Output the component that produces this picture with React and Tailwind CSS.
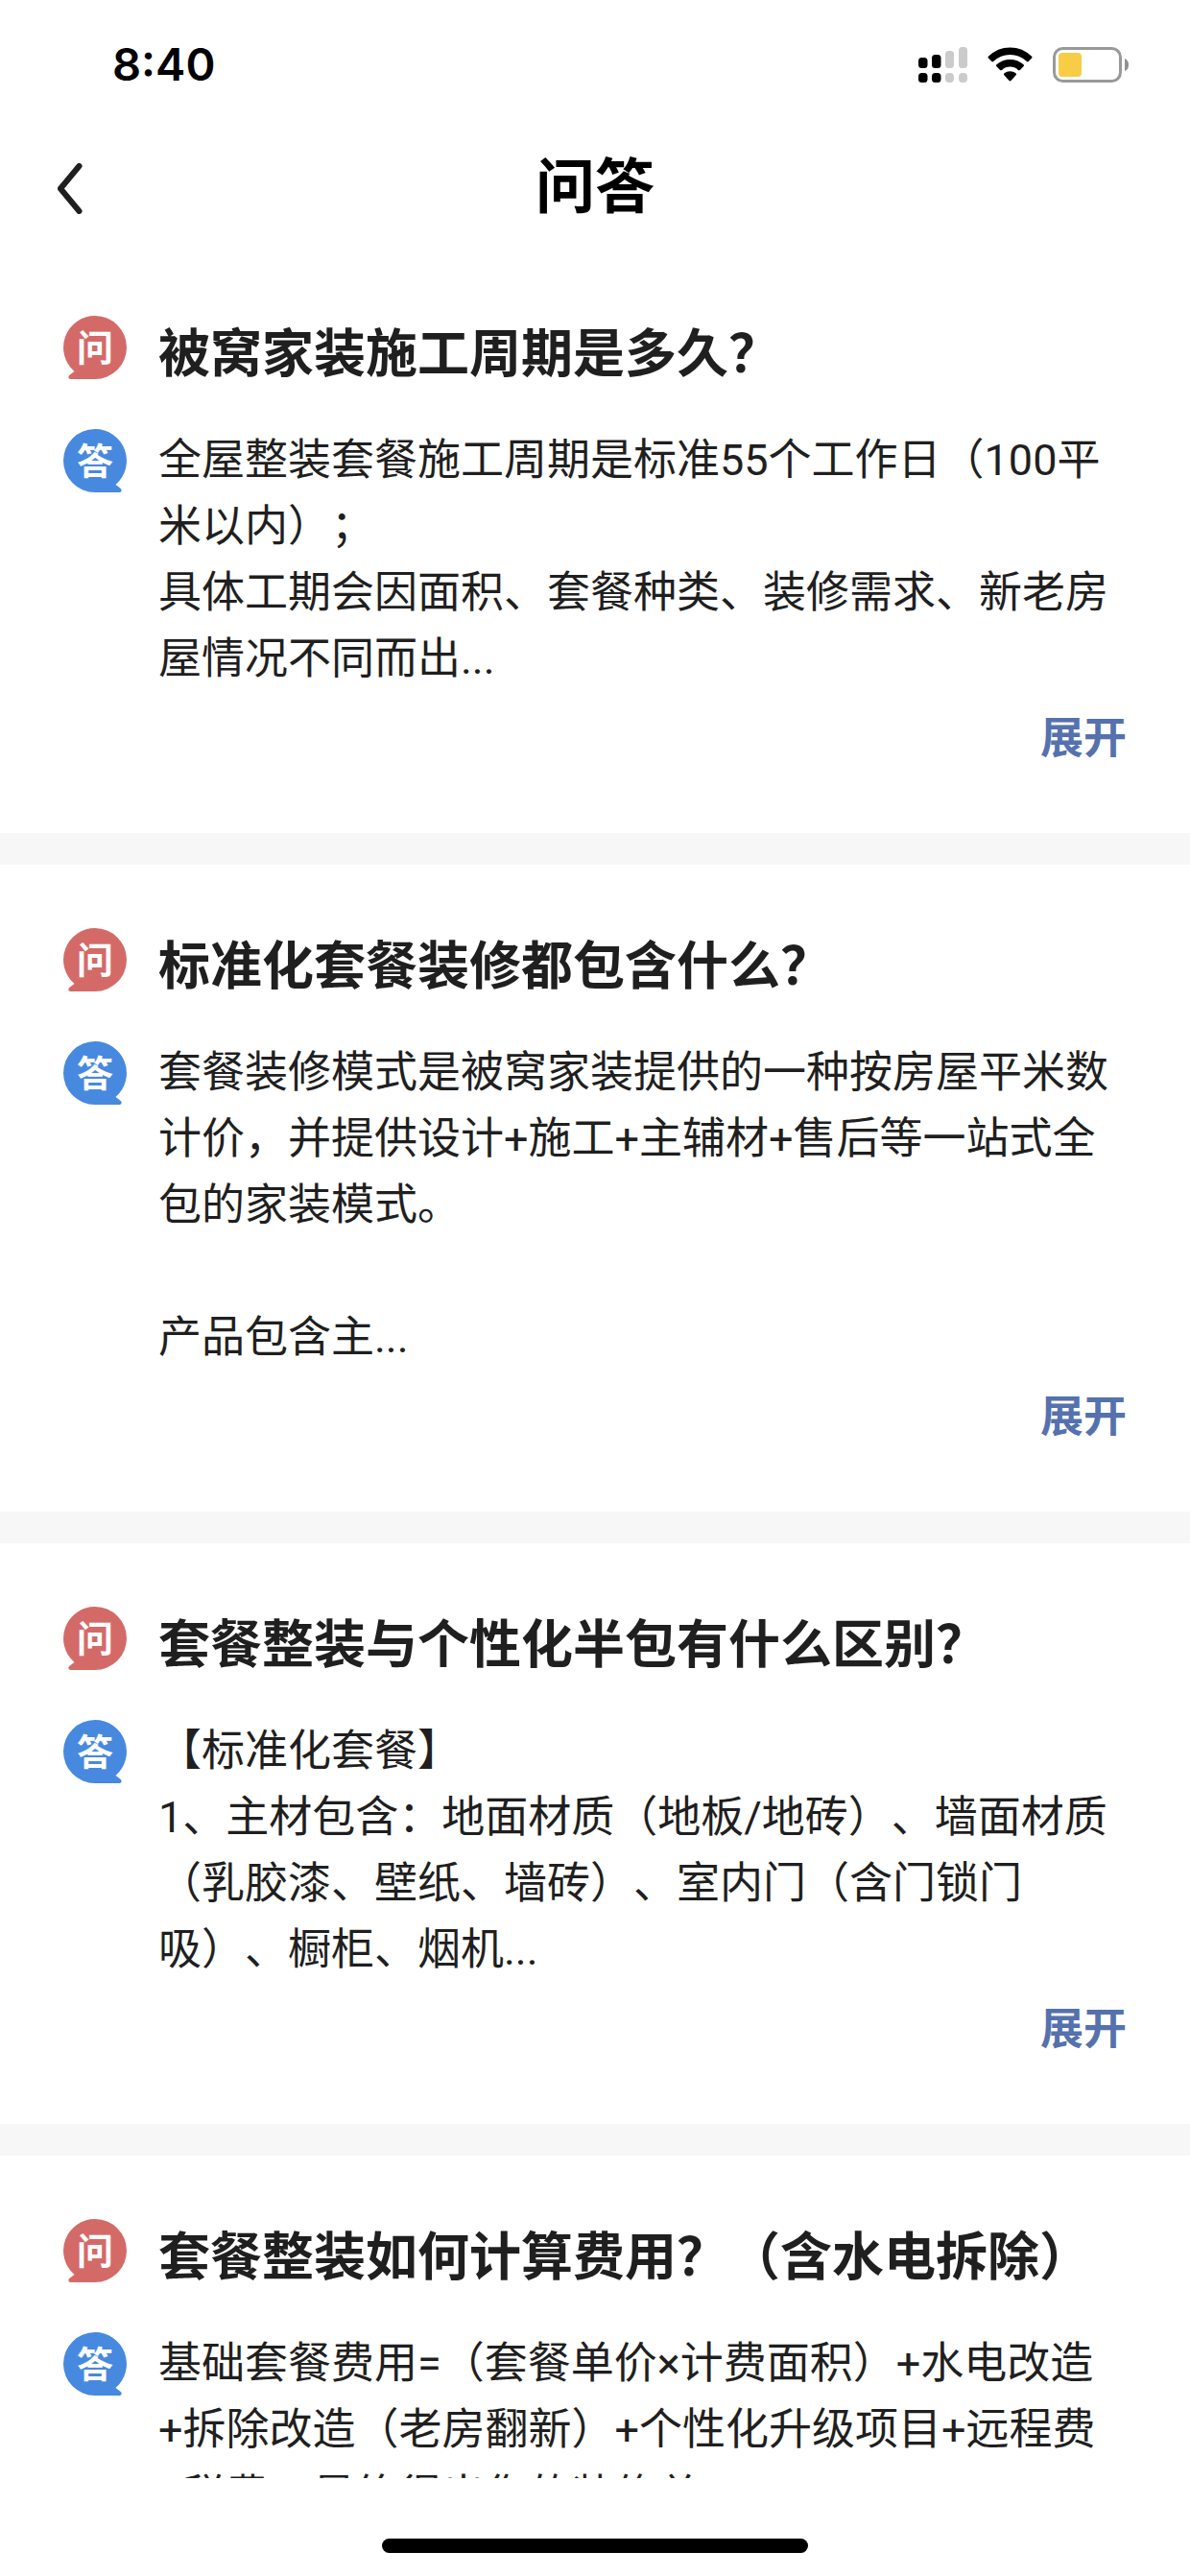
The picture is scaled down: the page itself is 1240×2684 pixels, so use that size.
import React, { useState } from 'react'

const faqs = [
  {
    id: 1,
    question: '被窝家装施工周期是多久？',
    answer: '全屋整装套餐施工周期是标准55个工作日（100平米以内）；\n具体工期会因面积、套餐种类、装修需求、新老房屋情况不同而出...',
  },
  {
    id: 2,
    question: '标准化套餐装修都包含什么？',
    answer: '套餐装修模式是被窝家装提供的一种按房屋平米数计价，并提供设计+施工+主辅材+售后等一站式全包的家装模式。\n\n产品包含主...',
  },
  {
    id: 3,
    question: '套餐整装与个性化半包有什么区别？',
    answer: '【标准化套餐】\n1、主材包含：地面材质（地板/地砖）、墙面材质（乳胶漆、壁纸、墙砖）、室内门（含门锁门吸）、橱柜、烟机...',
  },
  {
    id: 4,
    question: '套餐整装如何计算费用？（含水电拆除）',
    answer: '基础套餐费用=（套餐单价×计费面积）+水电改造+拆除改造（老房翻新）+个性化升级项目+远程费+税费，最终得出您的装修总...',
  },
]

function SignalIcon() {
  return (
    <svg width="51" height="37" viewBox="0 0 51 37" aria-hidden="true">
      <g fill="#000">
        <rect x="0" y="11" width="9.500" height="11" rx="3.500" />
        <rect x="14" y="8" width="9.500" height="14" rx="3.500" />
        <rect x="0" y="27" width="9.500" height="10" rx="3.500" />
        <rect x="14" y="27" width="9.500" height="10" rx="3.500" />
      </g>
      <g fill="#cbcbcb">
        <rect x="28" y="4" width="9" height="18" rx="3.500" />
        <rect x="42" y="0" width="9" height="22" rx="3.500" />
        <rect x="28" y="27" width="9" height="10" rx="4" />
        <rect x="42" y="27" width="9" height="10" rx="4" />
      </g>
    </svg>
  )
}

function WifiIcon() {
  return (
    <svg width="47" height="37" viewBox="0 0 48 37" aria-hidden="true">
      <path d="M0.900 9.600Q10.500 0 24 0Q37.500 0 47.100 9.600Q48 10.500 47.200 11.400L43.600 15Q42.700 15.800 41.800 15Q34 7.800 24 7.800Q14 7.800 6.200 15Q5.300 15.800 4.400 15L0.800 11.400Q0 10.500 0.900 9.600Z" />
      <path d="M9.600 18.300Q16 12.800 24 12.800Q32 12.800 38.400 18.300Q39.300 19.200 38.500 20.100L34.600 24Q33.600 24.900 32.600 24Q28.800 20.600 24 20.600Q19.200 20.600 15.400 24Q14.400 24.900 13.400 24L9.500 20.100Q8.700 19.200 9.600 18.300Z" />
      <path d="M17.800 27.500Q20.500 25.300 24 25.300Q27.500 25.300 30.200 27.500Q31.200 28.400 30.300 29.400L25 35.400Q24 36.400 23 35.400L17.700 29.400Q16.800 28.400 17.800 27.500Z" />
    </svg>
  )
}

function BatteryIcon() {
  return (
    <svg width="79" height="37" viewBox="0 0 79 37" aria-hidden="true">
      <rect x="1.500" y="1.500" width="69" height="34" rx="9" fill="none" stroke="#999" strokeWidth="3" />
      <rect x="6" y="6" width="24" height="25" rx="4" fill="#f7cd46" />
      <path d="M75 12Q79 13.500 79 18.500Q79 23.500 75 25Z" fill="#8f8f8f" />
    </svg>
  )
}

function QuestionBadge() {
  return (
    <svg className="shrink-0" width="66" height="66" viewBox="0 0 66 66" role="img" aria-label="问">
      <path d="M33 0A33 33 0 0 1 33 66H7Q5 65.500 5.500 63Q6 62 11.500 58A33 33 0 0 1 33 0Z" fill="#d46a67" />
      <text x="33" y="47" textAnchor="middle" fontSize="38" fontWeight="700" fill="#fff">问</text>
    </svg>
  )
}

function AnswerBadge() {
  return (
    <svg className="shrink-0 mt-0.5" width="66" height="66" viewBox="0 0 66 66" role="img" aria-label="答">
      <path d="M33 0A33 33 0 0 0 33 66H59Q61 65.500 60.500 63Q60 62 54.500 58A33 33 0 0 0 33 0Z" fill="#4789df" />
      <text x="33" y="47" textAnchor="middle" fontSize="38" fontWeight="700" fill="#fff">答</text>
    </svg>
  )
}

function FaqItem({ item }) {
  const [open, setOpen] = useState(false)

  return (
    <article className="bg-white px-[66px] pt-[66px] pb-16">
      <div className="flex items-start gap-[33px] mb-[34px]">
        <QuestionBadge />
        <h2 className="text-[54px] leading-[82px] font-bold">{item.question}</h2>
      </div>
      <div className="flex items-start gap-[33px]">
        <AnswerBadge />
        <p className="flex-1 text-[45px] leading-[69px] whitespace-pre-line">{item.answer}</p>
      </div>
      <div className="flex justify-end mt-3.5">
        <button type="button" aria-expanded={open} onClick={() => setOpen(!open)} className="text-[45px] leading-[69px] font-bold text-[#5571ae]">
          展开
        </button>
      </div>
    </article>
  )
}

function App() {
  return (
    <div lang="zh-CN" className="h-screen flex flex-col bg-white text-[#1f1f1f] font-[Roboto,'Noto_Sans_CJK_SC',sans-serif] [text-spacing-trim:space-all]">
      {/* Status bar */}
      <div className="shrink-0 flex items-center justify-between h-[135px] pl-[117px] pr-16 text-black">
        <span className="text-[47px] font-semibold font-[Inter,sans-serif]">8:40</span>
        <div className="flex items-center gap-[21px]">
          <SignalIcon />
          <WifiIcon />
          <BatteryIcon />
        </div>
      </div>

      {/* Title bar */}
      <header className="shrink-0 grid grid-cols-3 items-center h-32 pb-1.5">
        <button type="button" aria-label="返回" className="justify-self-start pl-[60px]">
          <svg width="26" height="53" viewBox="0 0 26 53" fill="none" stroke="#1f1f1f" strokeWidth="6" strokeLinecap="round" strokeLinejoin="round">
            <path d="M22.500 3L3 26.500L22.500 50" />
          </svg>
        </button>
        <h1 className="text-center text-[62px] leading-[80px] font-bold text-black">问答</h1>
      </header>

      {/* Question list */}
      <main className="flex-1 min-h-0 overflow-hidden">
        <div className="flex flex-col gap-[33px] bg-[#f7f7f7]">
          {faqs.map(item => <FaqItem key={item.id} item={item} />)}
        </div>
      </main>

      {/* Home indicator */}
      <footer className="shrink-0 flex justify-center items-end h-[102px] pb-6">
        <div className="w-[444px] h-[15px] rounded-full bg-black" />
      </footer>
    </div>
  )
}

export default App
